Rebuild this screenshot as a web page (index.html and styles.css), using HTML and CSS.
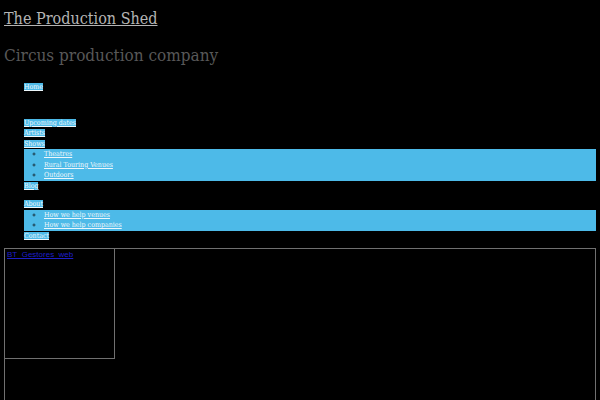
FILE: index.html
```html
<!DOCTYPE html>
<html>
<head>
<meta charset="utf-8">
<link rel="stylesheet" href="styles.css">
</head>
<body>
<div class="page">
  <header class="site-header">
    <h1 class="site-title"><a href="#">The Production Shed</a></h1>
    <p class="site-desc">Circus production company</p>
  </header>
  <nav class="menu">
    <ul class="top">
      <li class="home"><a href="#">Home</a></li>
      <li><a href="#">Upcoming dates</a></li>
      <li><a href="#">Artists</a></li>
      <li><a href="#">Shows</a>
        <ul class="sub">
          <li><a href="#">Theatres</a></li>
          <li><a href="#">Rural Touring Venues</a></li>
          <li><a href="#">Outdoors</a></li>
        </ul>
      </li>
      <li class="blog"><a href="#">Blog</a></li>
      <li><a href="#">About</a>
        <ul class="sub">
          <li><a href="#">How we help venues</a></li>
          <li><a href="#">How we help companies</a></li>
        </ul>
      </li>
      <li><a href="#">Contact</a></li>
    </ul>
  </nav>
  <section class="content">
    <div class="thumb"><a href="#">BT_Gestores_web</a></div>
  </section>
</div>
</body>
</html>
```
FILE: styles.css
```css
html, body {
  margin: 0;
  padding: 0;
  background: #000;
}
body {
  font-family: "DejaVu Serif Condensed", "DejaVu Serif", serif;
}
.page {
  padding: 0 4px;
}
.site-header {
  padding-top: 9px;
}
.site-title {
  margin: 0;
  font-size: 16px;
  font-weight: normal;
  line-height: 20px;
}
.site-title a {
  color: #b4b4b4;
  text-decoration: underline;
}
.site-desc {
  margin: 14px 0 0;
  font-size: 17px;
  line-height: 24px;
  color: #585858;
}
.menu {
  margin-top: 15px;
}
.top {
  list-style: none;
  margin: 0;
  padding: 0 0 0 20px;
  font-size: 7px;
  line-height: 10.5px;
}
.top a {
  color: #eef7fb;
  background: #4dbae8;
  text-decoration: underline;
}
.top > li.home {
  margin-bottom: 25px;
}
.top > li.blog {
  margin-bottom: 8px;
}
.sub {
  background: #4dbae8;
  list-style: circle;
  color: #1c3a4a;
  margin: 0;
  padding: 0 0 0 20px;
}
.content {
  margin-top: 7px;
  border: 1px solid #707070;
  height: 160px;
}
.thumb {
  width: 105px;
  height: 109px;
  border: 1px solid #707070;
  margin: -1px 0 0 -1px;
  padding: 0 2px;
  font-family: "Liberation Sans", sans-serif;
  font-size: 8px;
  line-height: 12px;
}
.thumb a {
  color: #1e1ec8;
}
```
